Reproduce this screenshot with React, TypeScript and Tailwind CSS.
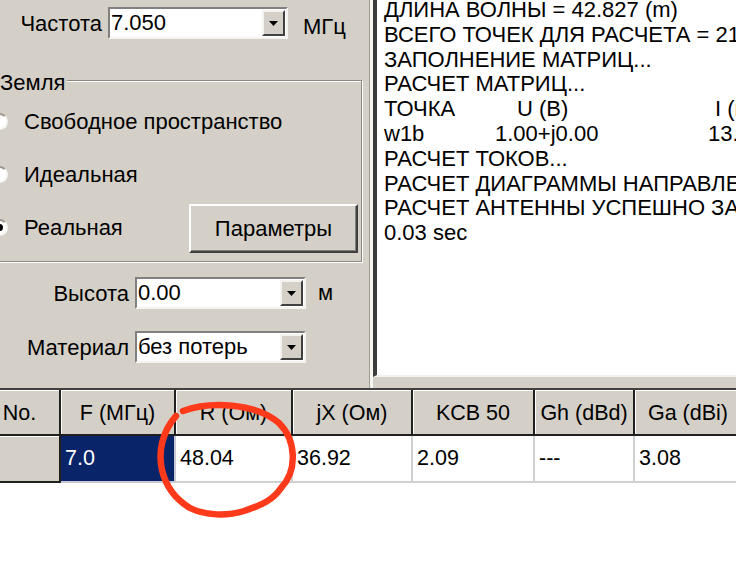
import React from 'react';

function Combo({ value, width }: { value: string; width: string }) {
  return (
    <div
      className={`${width} flex h-[32px] shrink-0 items-stretch border-2 border-t-[#808080] border-l-[#808080] border-b-[#f4f3f0] border-r-[#f4f3f0] bg-white`}
    >
      <span className="flex flex-1 items-center pl-[1px] leading-none">{value}</span>
      <span className="my-[1px] mr-[1px] flex w-[23px] items-center justify-center border-2 border-t-[#f4f3f0] border-l-[#f4f3f0] border-b-[#404040] border-r-[#404040] bg-[#d4d0c8]">
        <svg width="9" height="5" viewBox="0 0 9 5">
          <path d="M0 0h9L4.5 5z" fill="#000" />
        </svg>
      </span>
    </div>
  );
}

function Radio({ label, checked }: { label: string; checked?: boolean }) {
  return (
    <div className="flex h-[53px] items-center">
      <span className="relative flex h-[17px] w-[17px] shrink-0 items-center justify-center rounded-full border-2 border-t-[#9a968e] border-l-[#9a968e] border-b-[#f6f5f2] border-r-[#f6f5f2] bg-white">
        {checked && <span className="h-[7px] w-[7px] rounded-full bg-black" />}
      </span>
      <span className="ml-[16px]">{label}</span>
    </div>
  );
}

const memoLines = [
  'ДЛИНА ВОЛНЫ = 42.827 (m)',
  'ВСЕГО ТОЧЕК ДЛЯ РАСЧЕТА = 21',
  'ЗАПОЛНЕНИЕ МАТРИЦ...',
  'РАСЧЕТ МАТРИЦ...',
];

const memoTail = [
  'РАСЧЕТ ТОКОВ...',
  'РАСЧЕТ ДИАГРАММЫ НАПРАВЛЕННОСТИ...',
  'РАСЧЕТ АНТЕННЫ УСПЕШНО ЗАВЕРШЕН',
  '0.03 sec',
];

const headers = ['No.', 'F (МГц)', 'R (Ом)', 'jX (Ом)', 'KCB 50', 'Gh (dBd)', 'Ga (dBi)'];
const row = ['7.0', '48.04', '36.92', '2.09', '---', '3.08'];

export default function App() {
  return (
    <div className="relative h-[566px] w-[736px] overflow-hidden bg-white font-['Liberation_Sans',Arial,sans-serif] text-[22px] leading-[25px] text-black">
      {/* top area: settings + log */}
      <div className="flex h-[388px] bg-[#d4d0c8]">
        <div className="flex w-[369px] shrink-0 flex-col">
          <div className="flex items-center pt-[7px]">
            <span className="w-[108px] pr-[6px] text-right">Частота</span>
            <Combo value="7.050" width="w-[180px]" />
            <span className="ml-[15px] mt-[6px]">МГц</span>
          </div>

          <div className="relative ml-[-10px] mt-[41px] h-[182px] w-[372px] border border-[#8c8880] pt-[14px] shadow-[inset_1px_1px_0_#fff,1px_1px_0_#fff]">
            <span className="absolute left-[9px] top-[-9px] bg-[#d4d0c8] pr-[2px] leading-none">Земля</span>
            <Radio label="Свободное пространство" />
            <Radio label="Идеальная" />
            <div className="flex items-center">
              <div className="flex-1">
                <Radio label="Реальная" checked />
              </div>
              <button
                type="button"
                className="mr-[3px] mt-[1px] h-[49px] w-[169px] border-2 border-t-white border-l-white border-b-[#404040] border-r-[#404040] bg-[#d4d0c8] shadow-[inset_-1px_-1px_0_#808080]"
              >
                Параметры
              </button>
            </div>
          </div>

          <div className="mt-[15px] flex items-center">
            <span className="w-[129px] text-right">Высота</span>
            <span className="ml-[6px]">
              <Combo value="0.00" width="w-[171px]" />
            </span>
            <span className="ml-[12px] mb-[2px]">м</span>
          </div>
          <div className="mt-[22px] flex items-center">
            <span className="w-[129px] text-right">Материал</span>
            <span className="ml-[6px]">
              <Combo value="без потерь" width="w-[171px]" />
            </span>
          </div>
        </div>

        <div className="w-px bg-[#a09c94]" />
        <div className="w-[3px] bg-[#f6f5f2]" />

        <div className="flex min-w-0 flex-1 flex-col">
          <div className="h-[377px] overflow-hidden whitespace-nowrap border-b-2 border-l-4 border-b-[#f2f1ee] border-l-[#3c3c3c] bg-white pl-[7px] leading-[24.8px]">
            <div className="-mt-[2px]">
              {memoLines.map((l) => (
                <div key={l}>{l}</div>
              ))}
              <div className="flex">
                <span className="w-[133px] shrink-0">ТОЧКА</span>
                <span className="w-[198px] shrink-0">U (B)</span>
                <span>I (mA)</span>
              </div>
              <div className="flex">
                <span className="w-[111px] shrink-0">w1b</span>
                <span className="w-[213px] shrink-0">1.00+j0.00</span>
                <span>13.09-j10.03</span>
              </div>
              {memoTail.map((l) => (
                <div key={l}>{l}</div>
              ))}
            </div>
          </div>
        </div>
      </div>

      {/* results grid */}
      <div className="ml-[-20px] grid w-[763px] grid-cols-[81px_115px_117px_120px_122px_100px_108px] border-t-2 border-[#404040] text-[21.5px]">
        {headers.map((h) => (
          <div
            key={h}
            className="flex h-[46px] items-center justify-center border-b-2 border-r-2 border-[#202020] bg-[#d4d0c8] pt-[2px] shadow-[inset_1px_1px_0_#fff]"
          >
            {h}
          </div>
        ))}
        <div className="h-[47px] border-b-2 border-r-2 border-[#202020] bg-[#d4d0c8] shadow-[inset_1px_1px_0_#fff]" />
        {row.map((v, i) => (
          <div
            key={i}
            className={`flex h-[47px] items-center border-b-2 border-r-2 pl-[4px] ${
              i === 0 ? 'border-[#c8c8d4] bg-[#0a246a] text-white' : 'border-[#d0d0d0] bg-white'
            }`}
          >
            {v}
          </div>
        ))}
      </div>

      {/* hand-drawn marker */}
      <svg className="pointer-events-none absolute left-0 top-0" width="736" height="566" viewBox="0 0 736 566">
        <path
          d="M183 411 C210 401 256 403 279 423 C296 440 298 470 281 488 C273 500 262 505 244 511 C228 516 205 516 190 508 C175 499 166 487 162 470 C158 452 162 432 176 416"
          fill="none"
          stroke="#ff3a1a"
          strokeWidth="6.5"
          strokeLinecap="round"
          strokeLinejoin="round"
        />
      </svg>
    </div>
  );
}
